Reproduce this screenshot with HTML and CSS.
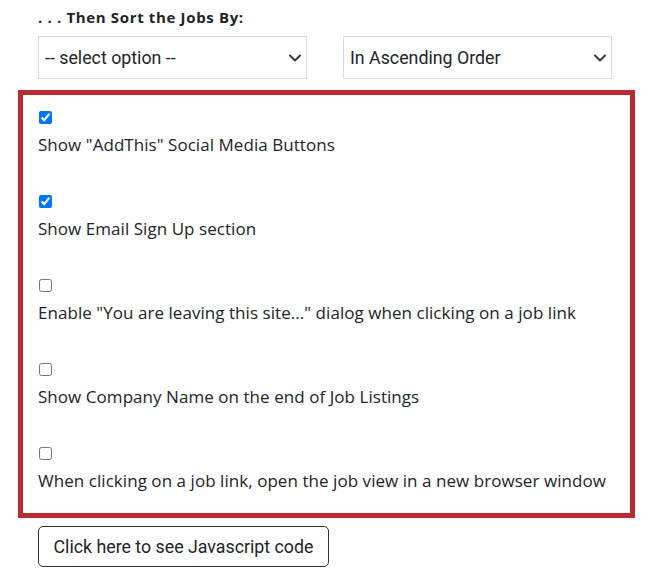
FILE: index.html
```html
<!DOCTYPE html>
<html>
<head>
<meta charset="utf-8">
<link rel="stylesheet" href="styles.css">
</head>
<body>
<div class="page">
  <div class="sort">
    <div class="heading">. . . Then Sort the Jobs By:</div>
    <div class="selects">
      <div class="select-wrap">
        <select class="select"><option>-- select option --</option></select>
        <svg class="chev" width="12" height="8" viewBox="0 0 12 8"><path d="M1 1.5l5 5 5-5" fill="none" stroke="#343a40" stroke-width="2" stroke-linecap="round" stroke-linejoin="round"/></svg>
      </div>
      <div class="select-wrap">
        <select class="select"><option>In Ascending Order</option></select>
        <svg class="chev" width="12" height="8" viewBox="0 0 12 8"><path d="M1 1.5l5 5 5-5" fill="none" stroke="#343a40" stroke-width="2" stroke-linecap="round" stroke-linejoin="round"/></svg>
      </div>
    </div>
  </div>
  <div class="options">
    <div class="item">
      <div class="check-line"><input type="checkbox" class="check" checked></div>
      <label class="label">Show "AddThis" Social Media Buttons</label>
    </div>
    <div class="item">
      <div class="check-line"><input type="checkbox" class="check" checked></div>
      <label class="label">Show Email Sign Up section</label>
    </div>
    <div class="item">
      <div class="check-line"><input type="checkbox" class="check"></div>
      <label class="label">Enable "You are leaving this site..." dialog when clicking on a job link</label>
    </div>
    <div class="item">
      <div class="check-line"><input type="checkbox" class="check"></div>
      <label class="label">Show Company Name on the end of Job Listings</label>
    </div>
    <div class="item">
      <div class="check-line"><input type="checkbox" class="check"></div>
      <label class="label">When clicking on a job link, open the job view in a new browser window</label>
    </div>
  </div>
  <button class="code-btn">Click here to see Javascript code</button>
</div>
</body>
</html>
```
FILE: styles.css
```css
html, body {
  margin: 0;
  padding: 0;
  background: #ffffff;
}
.page {
  padding-top: 5px;
  color: #212529;
  font-family: "Open Sans", "Liberation Sans", sans-serif;
}
.sort {
  padding: 0 42px 0 38px;
}
.heading {
  font-weight: 700;
  font-size: 15px;
  letter-spacing: 0.65px;
  line-height: 24px;
  color: #212529;
}
.selects {
  margin-top: 7px;
  display: grid;
  grid-template-columns: 1fr 1fr;
  column-gap: 36px;
}
.select-wrap {
  position: relative;
}
.select {
  appearance: none;
  -webkit-appearance: none;
  display: block;
  width: 100%;
  height: 43px;
  margin: 0;
  padding: 0 24px 0 6px;
  border: 1px solid #dcdcdc;
  border-radius: 0;
  background: #ffffff;
  color: #212529;
  font-family: Roboto, "Liberation Sans", sans-serif;
  font-size: 17.8px;
  outline: none;
}
.chev {
  position: absolute;
  right: 6px;
  top: 18px;
  pointer-events: none;
}
.options {
  margin: 11px 19px 0 18px;
  border: 5px solid #b92b2e;
  padding: 6px 15px 1px 15px;
}
.item {
  margin-bottom: 28px;
}
.item:last-child {
  margin-bottom: 19px;
}
.check-line {
  height: 32px;
  display: flex;
  align-items: center;
}
.check {
  width: 13px;
  height: 13px;
  margin: 0 0 0 1px;
}
.label {
  display: block;
  font-size: 17px;
  letter-spacing: 0.05px;
  line-height: 24px;
}
.code-btn {
  display: block;
  margin: 8px 0 0 38px;
  width: 291px;
  height: 41px;
  padding: 0;
  border: 1px solid #333333;
  border-radius: 5px;
  background: #ffffff;
  color: #212529;
  font-family: Roboto, "Liberation Sans", sans-serif;
  font-size: 17.8px;
}
```
